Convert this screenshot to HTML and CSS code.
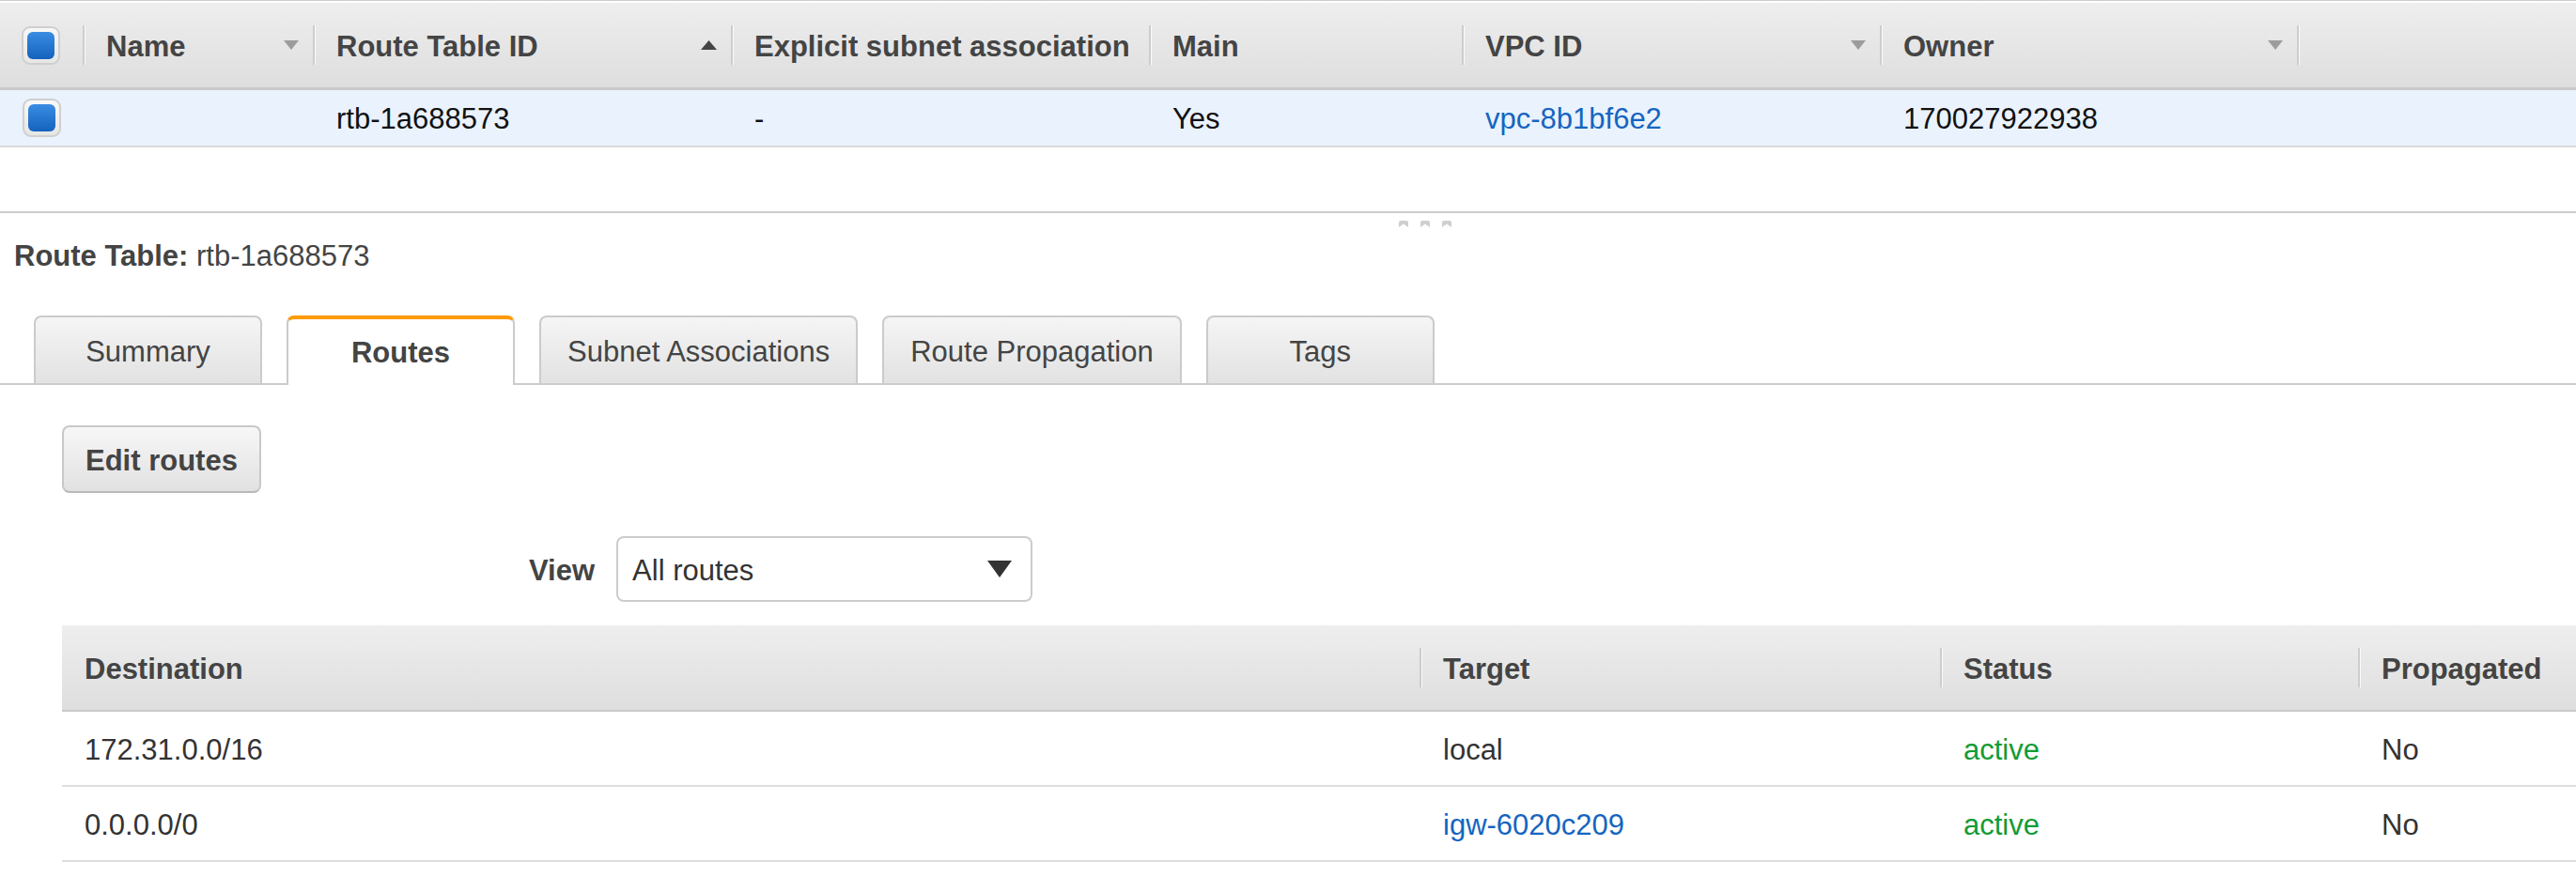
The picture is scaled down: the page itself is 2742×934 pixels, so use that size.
FILE: index.html
```html
<!DOCTYPE html>
<html>
<head>
<meta charset="utf-8">
<title>Route Tables</title>
<link rel="stylesheet" href="styles.css">
</head>
<body>
<div class="top-pane">
  <div class="grid-head">
    <div class="hcell chk-cell"><span class="chk"><span class="chk-in"></span></span></div>
    <div class="hcell"><span class="sep"></span><span class="hlabel">Name</span><svg class="sort" width="16" height="10" viewBox="0 0 16 10"><path d="M0 0H16L8 10Z" fill="#9c9c9c"/></svg></div>
    <div class="hcell"><span class="sep"></span><span class="hlabel">Route Table ID</span><svg class="sort" width="17" height="10" viewBox="0 0 17 10"><path d="M0 10H17L8.5 0Z" fill="#444"/></svg></div>
    <div class="hcell clip"><span class="sep"></span><span class="hlabel">Explicit subnet association</span></div>
    <div class="hcell"><span class="sep"></span><span class="hlabel">Main</span></div>
    <div class="hcell"><span class="sep"></span><span class="hlabel">VPC ID</span><svg class="sort" width="16" height="10" viewBox="0 0 16 10"><path d="M0 0H16L8 10Z" fill="#9c9c9c"/></svg></div>
    <div class="hcell"><span class="sep"></span><span class="hlabel">Owner</span><svg class="sort" width="16" height="10" viewBox="0 0 16 10"><path d="M0 0H16L8 10Z" fill="#9c9c9c"/></svg></div>
    <div class="hcell"><span class="sep"></span></div>
  </div>
  <div class="grid-row">
    <div class="dcell chk-cell"><span class="chk"><span class="chk-in"></span></span></div>
    <div class="dcell"></div>
    <div class="dcell">rtb-1a688573</div>
    <div class="dcell">-</div>
    <div class="dcell">Yes</div>
    <div class="dcell"><a class="link">vpc-8b1bf6e2</a></div>
    <div class="dcell">170027922938</div>
    <div class="dcell"></div>
  </div>
</div>

<div class="grip">
  <svg width="12" height="7" viewBox="0 0 12 7"><path d="M1 7V2Q1 0 3 0H9Q11 0 11 2V7L6 3.5Z" fill="#cfcfcf"/></svg>
  <svg width="12" height="7" viewBox="0 0 12 7"><path d="M1 7V2Q1 0 3 0H9Q11 0 11 2V7L6 3.5Z" fill="#cfcfcf"/></svg>
  <svg width="12" height="7" viewBox="0 0 12 7"><path d="M1 7V2Q1 0 3 0H9Q11 0 11 2V7L6 3.5Z" fill="#cfcfcf"/></svg>
</div>

<div class="title"><b>Route Table:</b> rtb-1a688573</div>

<div class="tabs">
  <div class="tab">Summary</div>
  <div class="tab active">Routes</div>
  <div class="tab">Subnet Associations</div>
  <div class="tab">Route Propagation</div>
  <div class="tab">Tags</div>
</div>

<div class="panel">
  <div class="btn">Edit routes</div>
  <div class="view-row">
    <span class="view-label">View</span>
    <div class="select"><span class="sel-text">All routes</span><svg width="26" height="18" viewBox="0 0 26 18"><path d="M0 0H26L13 18Z" fill="#333"/></svg></div>
  </div>
  <div class="rtable">
    <div class="rhead first">Destination</div>
    <div class="rhead"><span class="sep"></span><span class="hlabel">Target</span></div>
    <div class="rhead"><span class="sep"></span><span class="hlabel">Status</span></div>
    <div class="rhead"><span class="sep"></span><span class="hlabel">Propagated</span></div>

    <div class="rcell">172.31.0.0/16</div>
    <div class="rcell">local</div>
    <div class="rcell green">active</div>
    <div class="rcell">No</div>

    <div class="rcell">0.0.0.0/0</div>
    <div class="rcell"><a class="link">igw-6020c209</a></div>
    <div class="rcell green">active</div>
    <div class="rcell">No</div>
  </div>
</div>
</body>
</html>
```
FILE: styles.css
```css
* { box-sizing: border-box; }
html, body { margin: 0; padding: 0; background: #fff; }
body {
  font-family: "Liberation Sans", Arial, Helvetica, sans-serif;
  font-size: 31px;
  color: #333;
  overflow: hidden;
}

.top-pane {
  height: 227px;
  border-top: 1px solid #cccccc;
  border-bottom: 2px solid #cccccc;
  padding-top: 2px;
}

.grid-head, .grid-row {
  display: grid;
  grid-template-columns: 88px 245px 445px 445px 333px 445px 444px 1fr;
}

.grid-head {
  height: 93px;
  background: linear-gradient(#eeeeee, #dedede);
  border-bottom: 3px solid #c9c9c9;
}

.hcell {
  display: flex;
  align-items: center;
  padding-right: 15px;
  min-width: 0;
  font-weight: bold;
  color: #444;
}
.hcell.clip { padding-right: 22px; }

.sep {
  flex: none;
  width: 0;
  height: 42px;
  border-left: 2px solid #cdcdcd;
  border-right: 1px solid #fafafa;
}

.hlabel {
  flex: 1;
  min-width: 0;
  padding-left: 22px;
  padding-top: 3px;
  overflow: hidden;
  white-space: nowrap;
}

.sort { flex: none; }

.chk-cell { padding-left: 23px; }

.chk {
  display: flex;
  align-items: center;
  justify-content: center;
  width: 41px;
  height: 41px;
  border: 2px solid #cfcfcf;
  border-radius: 9px;
  background: linear-gradient(#f8f8f8, #e6e6e6);
}
.chk-in {
  width: 29px;
  height: 29px;
  border-radius: 6px;
  background: linear-gradient(#3a8de2, #1462be);
}

.grid-row {
  height: 61px;
  background: #eaf2fd;
  border-bottom: 2px solid #dadada;
}

.dcell {
  display: flex;
  align-items: center;
  padding-left: 25px;
  padding-top: 3px;
  white-space: nowrap;
  color: #111;
}
.dcell.chk-cell { padding-left: 24px; padding-top: 0; }

.link { color: #1565c0; text-decoration: none; }

.grip {
  display: flex;
  gap: 11px;
  padding-left: 1488px;
  margin-top: 8px;
  height: 7px;
}
.grip svg { display: block; }

.title {
  margin-top: 13px;
  padding-left: 15px;
  line-height: 36px;
  color: #444;
}

.tabs {
  display: flex;
  align-items: flex-end;
  gap: 26px;
  margin-top: 45px;
  padding-left: 36px;
  height: 74px;
  border-bottom: 2px solid #cccccc;
}

.tab {
  height: 72px;
  min-width: 243px;
  padding: 3px 28px 0;
  display: flex;
  align-items: center;
  justify-content: center;
  border: 2px solid #cbcbcb;
  border-bottom: 0;
  border-radius: 8px 8px 0 0;
  background: linear-gradient(#f5f5f5, #e2e2e2);
  color: #444;
  white-space: nowrap;
}

.tab.active {
  height: 74px;
  margin-bottom: -2px;
  background: #fff;
  border-top: 4px solid #ff9900;
  font-weight: bold;
  padding-top: 3px;
  padding-bottom: 2px;
}

.panel { padding-left: 66px; }

.btn {
  display: inline-flex;
  align-items: center;
  margin-top: 43px;
  height: 72px;
  padding: 3px 23px 0;
  border: 2px solid #c8c8c8;
  border-bottom-color: #b9b9b9;
  border-radius: 8px;
  background: linear-gradient(#f7f7f7, #e1e1e1);
  font-weight: bold;
  color: #444;
}

.view-row {
  display: flex;
  align-items: center;
  gap: 23px;
  margin-top: 46px;
  padding-left: 497px;
  height: 70px;
}

.view-label { font-weight: bold; color: #444; padding-top: 3px; }

.select {
  width: 443px;
  height: 70px;
  display: flex;
  align-items: center;
  justify-content: space-between;
  padding: 0 20px 0 15px;
  border: 2px solid #cccccc;
  border-radius: 8px;
  background: #fff;
  color: #333;
}
.sel-text { padding-top: 3px; }
.select svg { display: block; }

.rtable {
  margin-top: 25px;
  display: grid;
  grid-template-columns: 1445px 554px 445px 1fr;
}

.rhead {
  height: 92px;
  display: flex;
  align-items: center;
  background: linear-gradient(#eeeeee, #dedede);
  border-bottom: 2px solid #c9c9c9;
  font-weight: bold;
  color: #444;
  min-width: 0;
}
.rhead.first { padding-left: 24px; padding-top: 3px; }

.rcell {
  height: 80px;
  display: flex;
  align-items: center;
  padding-left: 25px;
  padding-top: 3px;
  border-bottom: 2px solid #dddddd;
  color: #333;
  white-space: nowrap;
}
.rcell:nth-child(4n+1) { padding-left: 24px; }

.green { color: #129b35; }
```
